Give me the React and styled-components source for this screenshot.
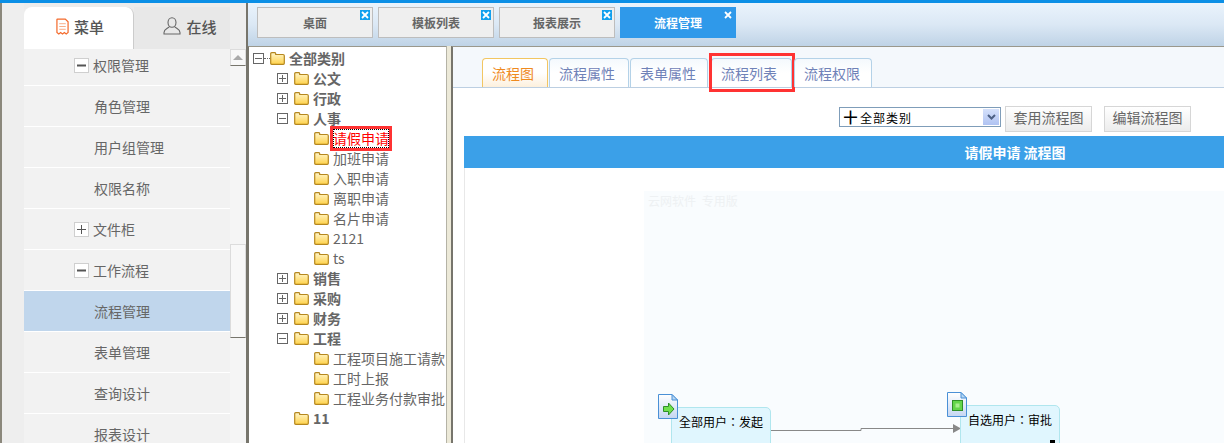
import React from 'react';
import styled, { createGlobalStyle } from 'styled-components';

const GlobalStyle = createGlobalStyle`
    html, body {
        margin: 0;
        height: 443px;
        overflow: hidden;
        background: #fff;
    }
    * {
        box-sizing: border-box;
    }
`;

const Page = styled.div`
    width: 1224px;
    height: 443px;
    overflow: hidden;
    display: flex;
    flex-direction: column;
    font-family: "Noto Sans CJK SC", "Liberation Sans", sans-serif;
    font-size: 14px;
    color: #666;
`;

const TopBar = styled.div`
    height: 3px;
    flex: none;
    background: #0b8fe6;
`;

const Columns = styled.div`
    flex: 1;
    min-height: 0;
    display: flex;
`;

const Sidebar = styled.aside`
    width: 248px;
    flex: none;
    display: flex;
    flex-direction: column;
    padding-left: 22px;
    background: #eeeeee;
    border-left: 2px solid #8b887c;
    border-right: 2px solid #77756c;
`;

const SideTabs = styled.div`
    display: flex;
    height: 46px;
    padding-top: 4px;
    flex: none;
    width: 206px;
    background: #ececec;
`;

const SideTab = styled.div`
    display: flex;
    align-items: center;
    justify-content: center;
    gap: 5px;
    font-size: 15px;
    font-weight: 500;
    color: #555;
    width: ${p => (p.$active ? '110px' : '96px')};
    background: ${p => (p.$active ? '#fff' : '#e8e8e8')};
    border-radius: ${p => (p.$active ? '8px 8px 0 0' : '0')};
    border-right: ${p => (p.$active ? '1px solid #ccc' : 'none')};
    padding: ${p => (p.$active ? '0 0 4px 3px' : '0 0 4px 16px')};
`;

const SideBody = styled.div`
    flex: 1;
    min-height: 0;
    display: flex;
`;

const MenuList = styled.div`
    width: 206px;
    flex: none;
    overflow: hidden;
    background: #f2f2f2;
`;

const MenuInner = styled.div`
    margin-top: -4px;
`;

const MenuRow = styled.div`
    height: 41px;
    display: flex;
    align-items: center;
    gap: 4px;
    padding-left: ${p => (p.$group ? '50px' : '70px')};
    border-bottom: 1px solid #fff;
    background: ${p => (p.$selected ? '#c0d6ec' : 'transparent')};
    color: #666;
`;

const Toggle = styled.span`
    width: 15px;
    height: 15px;
    flex: none;
    border: 1px solid #cfcfcf;
    background: #fff;
    display: flex;
    align-items: center;
    justify-content: center;
`;

const ScrollBar = styled.div`
    width: 16px;
    flex: none;
    background: #f5f5f5;
    display: flex;
    flex-direction: column;
`;

const ScrollButton = styled.div`
    height: 17px;
    flex: none;
    background: #f8f8f8;
    border: 1px solid #dcdcdc;
    border-bottom: 1px solid #77756c;
    display: flex;
    align-items: center;
    justify-content: center;
    &::before {
        content: '';
        border-left: 5px solid transparent;
        border-right: 5px solid transparent;
        border-bottom: 5px solid #aaa;
    }
`;

const ScrollThumb = styled.div`
    height: 94px;
    flex: none;
    margin-top: 178px;
    background: #f8f8f8;
    border: 1px solid #dcdcdc;
    border-bottom: 1px solid #77756c;
`;

const Workspace = styled.div`
    flex: 1;
    min-width: 0;
    display: flex;
    flex-direction: column;
`;

const TaskBar = styled.div`
    height: 43px;
    flex: none;
    display: flex;
    gap: 5px;
    padding: 4px 0 0 9px;
    background: linear-gradient(#eaf3fc, #dbe8f5 50%, #bfd3e6);
`;

const TaskTab = styled.div`
    position: relative;
    width: 116px;
    height: 31px;
    display: flex;
    align-items: center;
    justify-content: center;
    font-size: 12px;
    font-weight: 700;
    color: ${p => (p.$active ? '#fff' : '#666')};
    background: ${p => (p.$active ? '#2f99ea' : '#efefef')};
    border: 1px solid ${p => (p.$active ? '#2f99ea' : '#bdbdbd')};
`;

const TaskClose = styled.span`
    position: absolute;
    top: 2px;
    right: 2px;
    width: 10px;
    height: 10px;
    background: ${p => (p.$active ? 'transparent' : '#12a0ee')};
    display: flex;
    align-items: center;
    justify-content: center;
`;

const Split = styled.div`
    flex: 1;
    min-height: 0;
    display: flex;
    background: #ece9d8;
`;

const TreePanel = styled.div`
    width: 199px;
    flex: none;
    background: #fff;
    border-left: 1px solid #77756c;
    border-top: 1px solid #9a988c;
    border-right: 1px solid #b5b3a6;
    padding-top: 1px;
    overflow: hidden;
`;

const TreeRow = styled.div`
    height: 20px;
    display: flex;
    align-items: center;
    white-space: nowrap;
    padding-left: ${p => p.$indent}px;
    font-weight: ${p => (p.$bold ? 700 : 400)};
    color: #666;
`;

const TreeToggle = styled.span`
    width: 11px;
    height: 11px;
    flex: none;
    margin-right: 6px;
    border: 1px solid #666;
    display: flex;
    align-items: center;
    justify-content: center;
`;

const Dots = styled.span`
    width: 6px;
    margin-left: -6px;
    border-top: 1px dotted #666;
`;

const TreeLabel = styled.span`
    margin-left: 4px;
    ${p => p.$marked && `
        color: #f00;
        line-height: 19px;
        outline: 1px dotted #000;
        outline-offset: -1px;
        box-shadow: 0 0 0 3px #f33;
    `}
`;

const MainPanel = styled.main`
    flex: 1;
    min-width: 0;
    margin-left: 4px;
    background: #fff;
    border-left: 2px solid #77756c;
    border-top: 1px solid #9a988c;
    position: relative;
    overflow: hidden;
`;

const MainTabs = styled.div`
    height: 41px;
    display: flex;
    align-items: flex-end;
    gap: 1px;
    padding-left: 29px;
    background: #f4f8fc;
    border-bottom: 1px solid #bccfe2;
`;

const MainTab = styled.div`
    position: relative;
    height: 29px;
    width: ${p => p.$width}px;
    margin-left: ${p => p.$gap || 0}px;
    padding-left: 9px;
    display: flex;
    align-items: center;
    color: ${p => (p.$active ? '#ef8a1e' : '#6f82b8')};
    background: ${p => (p.$active
        ? 'linear-gradient(#fff, #fff 50%, #fdf0dc)'
        : 'linear-gradient(#f4f9fd, #fff 50%, #fff)')};
    border: 1px solid ${p => (p.$active ? '#f2c662' : '#b4d2e8')};
    border-bottom: none;
    border-radius: 4px 4px 0 0;
    ${p => p.$marked && `
        &::after {
            content: '';
            position: absolute;
            inset: -6px -4px -5px -3px;
            border: 3px solid #f33;
        }
    `}
`;

const Toolbar = styled.div`
    height: 48px;
    display: flex;
    align-items: flex-start;
    padding: 18px 0 0 386px;
`;

const FakeSelect = styled.div`
    width: 162px;
    height: 20px;
    margin-top: 1px;
    display: flex;
    align-items: center;
    border: 1px solid #7f9db9;
    background: #fff;
    color: #000;
    font-size: 12px;
    letter-spacing: 1px;
    padding-left: 4px;
`;

const SelectCross = styled.span`
    font-size: 13px;
    font-weight: 700;
    letter-spacing: 0;
    line-height: 14px;
    width: 16px;
    flex: none;
`;

const SelectText = styled.span`
    flex: 1;
`;

const SelectArrow = styled.span`
    width: 16px;
    height: 16px;
    margin-right: 1px;
    flex: none;
    background: linear-gradient(#d5e1fb, #b0c3f2);
    display: flex;
    align-items: center;
    justify-content: center;
`;

const ToolButton = styled.div`
    width: 87px;
    height: 26px;
    margin-left: ${p => p.$gap}px;
    padding-bottom: 4px;
    display: flex;
    align-items: center;
    justify-content: center;
    color: #666;
    border: 1px solid #d6d6d6;
    background: linear-gradient(#fff, #ececec);
`;

const ChartWrap = styled.div`
    margin-left: 11px;
    width: 1102px;
    border-left: 1px solid #e8e8e8;
`;

const ChartTitle = styled.div`
    height: 32px;
    display: flex;
    align-items: center;
    justify-content: center;
    background: #3ba0e8;
    color: #fff;
    font-weight: 700;
    font-size: 14px;
    margin-left: -1px;
`;

const Canvas = styled.div`
    position: relative;
    height: 300px;
    margin: 23px 0 0 179px;
    background: #f9fcfe;
`;

const Watermark = styled.div`
    position: absolute;
    left: 4px;
    top: 1px;
    font-size: 12px;
    word-spacing: 3px;
    color: #eef1f3;
`;

const FlowNode = styled.div`
    position: absolute;
    left: ${p => p.$x}px;
    top: ${p => p.$y}px;
    width: 100px;
    height: 80px;
    padding: 5px 0 0 7px;
    background: #e0f6fe;
    border: 1px solid #b0e6ee;
    border-radius: 5px 5px 0 0;
    font-family: "Noto Sans CJK TC", "Liberation Sans", sans-serif;
    font-size: 12px;
    color: #000;
    white-space: nowrap;
`;

const NodeIcon = styled.svg`
    position: absolute;
    left: ${p => p.$x}px;
    top: ${p => p.$y}px;
`;

const FlowLine = styled.svg`
    position: absolute;
    left: 127px;
    top: 230px;
`;

const Handle = styled.div`
    position: absolute;
    left: 406px;
    top: 249px;
    width: 5px;
    height: 5px;
    background: #000;
`;

const Folder = () => (
    <svg width="15" height="13" viewBox="0 0 15 13" style={{ flex: 'none' }}>
        <defs>
            <linearGradient id="folderFill" x1="0" y1="0" x2="0" y2="1">
                <stop offset="0" stopColor="#fff6cc" />
                <stop offset="1" stopColor="#ffd24a" />
            </linearGradient>
        </defs>
        <path d="M.7 2.500V1.700q0-1 1-1h3q.8 0 1 1v.8h7.300q1.300 0 1.300 1.300V11.300q0 1-1 1H1.700q-1 0-1-1z" fill="url(#folderFill)" stroke="#b5871f" strokeWidth="1.200" />
    </svg>
);

const Sign = ({ open, size = 7, color = '#666', weight = 1 }) => (
    <svg width={size} height={size} viewBox={`0 0 ${size} ${size}`}>
        <rect x="0" y={(size - weight) / 2} width={size} height={weight} fill={color} />
        {!open && <rect x={(size - weight) / 2} y="0" width={weight} height={size} fill={color} />}
    </svg>
);

const MenuIcon = () => (
    <svg width="13" height="17" viewBox="0 0 14 18">
        <path d="M1 1.500q0-.5.500-.5H10l3 3V15.500l-2 1.500-2-1.500-2 1.500-2-1.500-2 1.500-2-1.500z" fill="#fff" stroke="#f4692a" strokeWidth="1.300" />
        <path d="M3.500 6h7M3.500 9h7M3.500 12h7" stroke="#f9a77e" />
    </svg>
);

const UserIcon = () => (
    <svg width="18" height="18" viewBox="0 0 18 18" fill="none" stroke="#666" strokeWidth="1.100">
        <ellipse cx="9" cy="5.500" rx="4" ry="4.800" />
        <path d="M6.500 9.500C5 11.500 1 12 1 15.500V17h16v-1.500c0-3.500-4-4-5.500-6" />
    </svg>
);

const CloseMark = ({ color = '#fff' }) => (
    <svg width="8" height="8" viewBox="0 0 8 8">
        <path d="M1 1l6 6M7 1L1 7" stroke={color} strokeWidth="1.800" />
    </svg>
);

const DocIcon = ({ x, y, kind }) => (
    <NodeIcon $x={x} $y={y} width="20" height="25" viewBox="0 0 20 25">
        <defs>
            <linearGradient id="docFill" x1="0" y1="0" x2="0" y2="1">
                <stop offset="0" stopColor="#fff" />
                <stop offset="1" stopColor="#c5d6f2" />
            </linearGradient>
        </defs>
        <path d="M.5.500H14L19.500 6V24.500H.5z" fill="url(#docFill)" stroke="#4a90d6" />
        <path d="M14 .5V6H19.500z" fill="#b8d8f4" stroke="#4a90d6" />
        {kind === 'start'
            ? <path d="M5.500 12.500h5V9l5.500 6-5.500 6v-3.500h-5z" fill="#6fe04c" stroke="#2f8f28" />
            : <g><rect x="5.500" y="8.500" width="10" height="10" fill="#63d64a" stroke="#2f8f28" /><rect x="8.500" y="11.500" width="4" height="4" fill="#a8ee90" /></g>}
    </NodeIcon>
);

const menuRows = [
    { label: '权限管理', group: true, open: true },
    { label: '角色管理' },
    { label: '用户组管理' },
    { label: '权限名称' },
    { label: '文件柜', group: true },
    { label: '工作流程', group: true, open: true },
    { label: '流程管理', selected: true },
    { label: '表单管理' },
    { label: '查询设计' },
    { label: '报表设计' }
];

const taskTabs = ['桌面', '模板列表', '报表展示', '流程管理'];

const treeRows = [
    { label: '公文', indent: 28, bold: true, toggle: 'closed' },
    { label: '行政', indent: 28, bold: true, toggle: 'closed' },
    { label: '人事', indent: 28, bold: true, toggle: 'open' },
    { label: '请假申请', indent: 65, marked: true },
    { label: '加班申请', indent: 65 },
    { label: '入职申请', indent: 65 },
    { label: '离职申请', indent: 65 },
    { label: '名片申请', indent: 65 },
    { label: '2121', indent: 65 },
    { label: 'ts', indent: 65 },
    { label: '销售', indent: 28, bold: true, toggle: 'closed' },
    { label: '采购', indent: 28, bold: true, toggle: 'closed' },
    { label: '财务', indent: 28, bold: true, toggle: 'closed' },
    { label: '工程', indent: 28, bold: true, toggle: 'open' },
    { label: '工程项目施工请款', indent: 65 },
    { label: '工时上报', indent: 65 },
    { label: '工程业务付款审批', indent: 65 },
    { label: '11', indent: 45, bold: true }
];

const mainTabs = [
    { label: '流程图', width: 66, active: true },
    { label: '流程属性', width: 80 },
    { label: '表单属性', width: 78 },
    { label: '流程列表', width: 81, gap: 2, marked: true },
    { label: '流程权限', width: 78, gap: 1 }
];

const App = () => (
    <Page>
        <GlobalStyle />
        <TopBar />
        <Columns>
            <Sidebar>
                <SideTabs>
                    <SideTab $active><MenuIcon />菜单</SideTab>
                    <SideTab><UserIcon />在线</SideTab>
                </SideTabs>
                <SideBody>
                    <MenuList>
                        <MenuInner>
                            {menuRows.map(row => (
                                <MenuRow key={row.label} $group={row.group} $selected={row.selected}>
                                    {row.group && (
                                        <Toggle>
                                            <Sign open={row.open} size={9} weight={row.open ? 2 : 1} color="#555" />
                                        </Toggle>
                                    )}
                                    {row.label}
                                </MenuRow>
                            ))}
                        </MenuInner>
                    </MenuList>
                    <ScrollBar>
                        <ScrollButton />
                        <ScrollThumb />
                    </ScrollBar>
                </SideBody>
            </Sidebar>
            <Workspace>
                <TaskBar>
                    {taskTabs.map((tab, i) => (
                        <TaskTab key={tab} $active={i === 3}>
                            {tab}
                            <TaskClose $active={i === 3}><CloseMark /></TaskClose>
                        </TaskTab>
                    ))}
                </TaskBar>
                <Split>
                    <TreePanel>
                        <TreeRow $indent={4} $bold>
                            <TreeToggle><Sign open /></TreeToggle>
                            <Dots />
                            <Folder />
                            <TreeLabel>全部类别</TreeLabel>
                        </TreeRow>
                        {treeRows.map(row => (
                            <TreeRow key={row.label} $indent={row.indent} $bold={row.bold}>
                                {row.toggle && (
                                    <TreeToggle><Sign open={row.toggle === 'open'} /></TreeToggle>
                                )}
                                <Folder />
                                <TreeLabel $marked={row.marked}>{row.label}</TreeLabel>
                            </TreeRow>
                        ))}
                    </TreePanel>
                    <MainPanel>
                        <MainTabs>
                            {mainTabs.map(tab => (
                                <MainTab
                                    key={tab.label}
                                    $width={tab.width}
                                    $gap={tab.gap}
                                    $active={tab.active}
                                    $marked={tab.marked}
                                >
                                    {tab.label}
                                </MainTab>
                            ))}
                        </MainTabs>
                        <Toolbar>
                            <FakeSelect>
                                <SelectCross>╋</SelectCross>
                                <SelectText>全部类别</SelectText>
                                <SelectArrow>
                                    <svg width="9" height="6" viewBox="0 0 9 6">
                                        <path d="M1 1l3.500 3.500L8 1" fill="none" stroke="#4d6185" strokeWidth="2" />
                                    </svg>
                                </SelectArrow>
                            </FakeSelect>
                            <ToolButton $gap={4}>套用流程图</ToolButton>
                            <ToolButton $gap={12}>编辑流程图</ToolButton>
                        </Toolbar>
                        <ChartWrap>
                            <ChartTitle>请假申请 流程图</ChartTitle>
                            <Canvas>
                                <Watermark>云网软件 专用版</Watermark>
                                <FlowLine width="190" height="14" viewBox="0 0 190 14">
                                    <path d="M0 9.500H90V7.500H182" fill="none" stroke="#888" />
                                    <path d="M182 3L190 7.500L182 12z" fill="#888" />
                                </FlowLine>
                                <FlowNode $x={27} $y={216}>全部用户：发起</FlowNode>
                                <DocIcon x={14} y={203} kind="start" />
                                <FlowNode $x={316} $y={214}>自选用户：审批</FlowNode>
                                <DocIcon x={303} y={201} kind="task" />
                                <Handle />
                            </Canvas>
                        </ChartWrap>
                    </MainPanel>
                </Split>
            </Workspace>
        </Columns>
    </Page>
);

export default App;
